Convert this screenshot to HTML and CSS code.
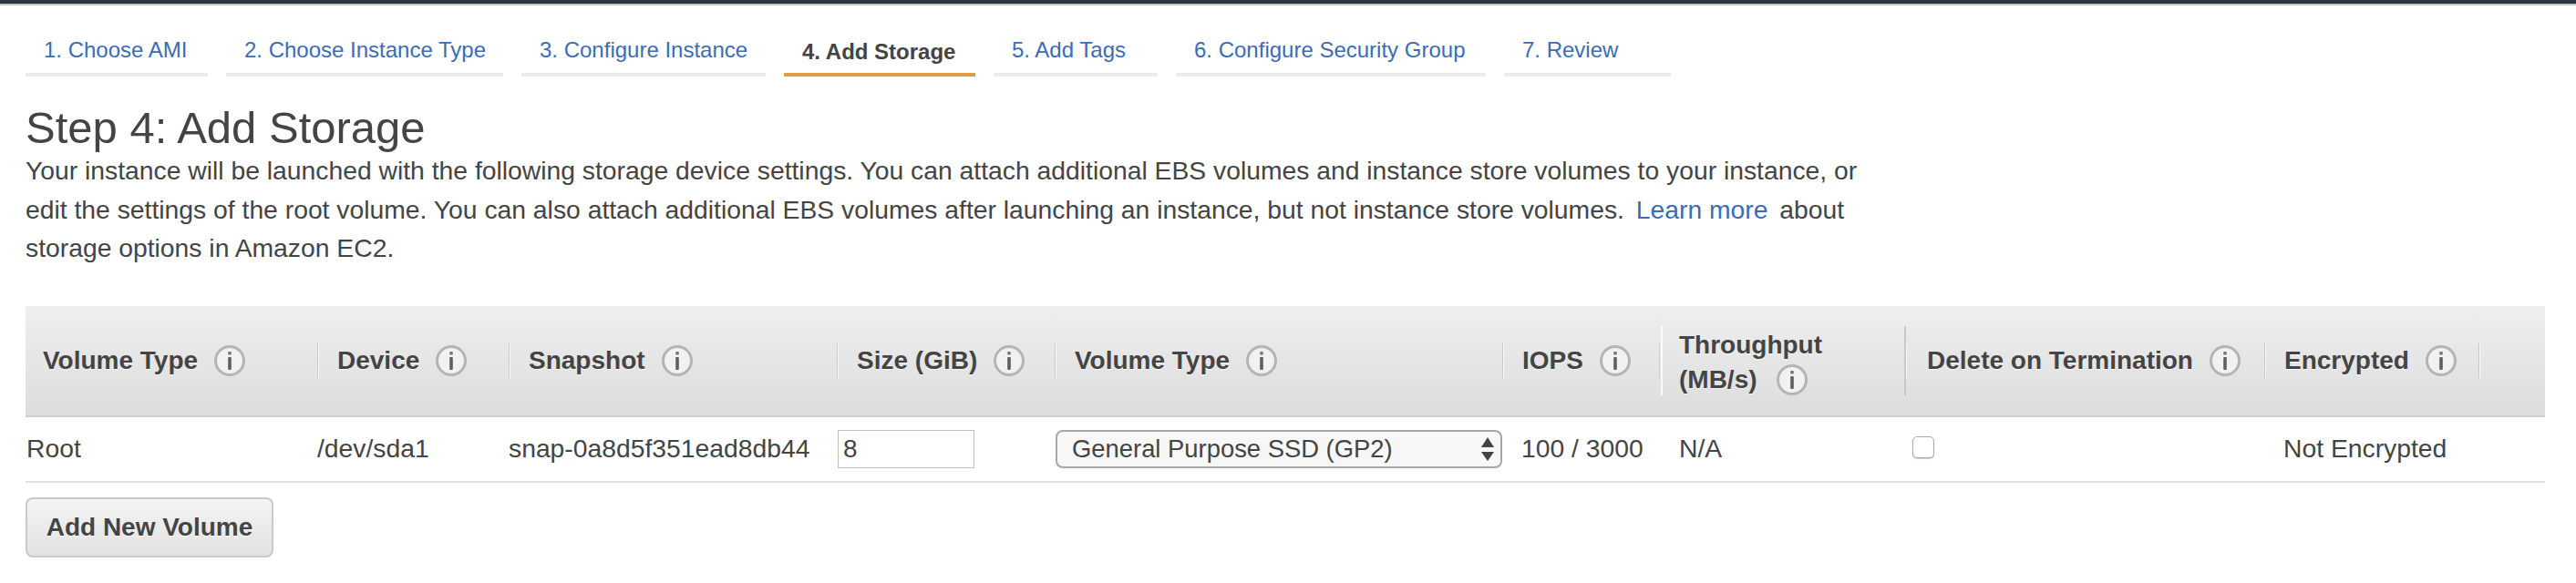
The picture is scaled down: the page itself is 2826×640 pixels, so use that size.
FILE: index.html

```html
<!DOCTYPE html>
<html lang="en">
<head>
    <meta charset="UTF-8">
    <title>Step 4: Add Storage</title>
    <link rel="stylesheet" href="styles.css">
</head>
<body>
    <div class="topBar"></div>

    <ul class="steps">
        <li class="step step1"><a href="#">1. Choose AMI</a></li>
        <li class="step step2"><a href="#">2. Choose Instance Type</a></li>
        <li class="step step3"><a href="#">3. Configure Instance</a></li>
        <li class="step step4 active"><a href="#">4. Add Storage</a></li>
        <li class="step step5"><a href="#">5. Add Tags</a></li>
        <li class="step step6"><a href="#">6. Configure Security Group</a></li>
        <li class="step step7"><a href="#">7. Review</a></li>
    </ul>

    <h1 class="title">Step 4: Add Storage</h1>
    <p class="intro">
        Your instance will be launched with the following storage device settings. You can attach additional EBS volumes and instance store volumes to your instance, or<br>
        edit the settings of the root volume. You can also attach additional EBS volumes after launching an instance, but not instance store volumes. <a class="learnMore" href="#">Learn more</a> about<br>
        storage options in Amazon EC2.
    </p>

    <table class="volumes">
        <colgroup>
            <col class="colType">
            <col class="colDevice">
            <col class="colSnapshot">
            <col class="colSize">
            <col class="colVolume">
            <col class="colIops">
            <col class="colThroughput">
            <col class="colDelete">
            <col class="colEncrypted">
            <col>
        </colgroup>
        <thead>
            <tr>
                <th><div class="head first">Volume Type <svg class="info" viewBox="0 0 34 34"><use href="#infoIcon"/></svg></div></th>
                <th><div class="head sep">Device <svg class="info" viewBox="0 0 34 34"><use href="#infoIcon"/></svg></div></th>
                <th><div class="head sep">Snapshot <svg class="info" viewBox="0 0 34 34"><use href="#infoIcon"/></svg></div></th>
                <th><div class="head sep">Size (GiB) <svg class="info" viewBox="0 0 34 34"><use href="#infoIcon"/></svg></div></th>
                <th><div class="head sep">Volume Type <svg class="info" viewBox="0 0 34 34"><use href="#infoIcon"/></svg></div></th>
                <th><div class="head sep iops">IOPS <svg class="info" viewBox="0 0 34 34"><use href="#infoIcon"/></svg></div></th>
                <th><div class="head tall">Throughput<br>(MB/s) <svg class="info" viewBox="0 0 34 34"><use href="#infoIcon"/></svg></div></th>
                <th><div class="head sep afterTall">Delete on Termination <svg class="info" viewBox="0 0 34 34"><use href="#infoIcon"/></svg></div></th>
                <th><div class="head sep">Encrypted <svg class="info" viewBox="0 0 34 34"><use href="#infoIcon"/></svg></div></th>
                <th><div class="head sep"></div></th>
            </tr>
        </thead>
        <tbody>
            <tr>
                <td class="tight">Root</td>
                <td>/dev/sda1</td>
                <td>snap-0a8d5f351ead8db44</td>
                <td><input class="sizeInput" type="text" value="8"></td>
                <td>
                    <div class="selectWrap">
                        <select class="volumeSelect">
                            <option>General Purpose SSD (GP2)</option>
                        </select>
                        <svg class="selectArrows" width="16" height="26" viewBox="0 0 16 26">
                            <path d="M8 0 L15 11 L1 11 Z M1 16 L15 16 L8 26 Z" fill="#444"/>
                        </svg>
                    </div>
                </td>
                <td class="padded">100 / 3000</td>
                <td class="padded">N/A</td>
                <td class="checkCell"><input class="deleteCheck" type="checkbox"></td>
                <td class="padded" colspan="2">Not Encrypted</td>
            </tr>
        </tbody>
    </table>

    <button class="addVolume">Add New Volume</button>

    <svg class="iconDefs" width="0" height="0">
        <symbol id="infoIcon" viewBox="0 0 34 34">
            <circle cx="17" cy="17" r="15.5" fill="#f1f1f1" stroke="#b4b4b4" stroke-width="3"/>
            <rect x="15.2" y="7" width="3.6" height="3.6" rx="1" fill="#777"/>
            <rect x="15.2" y="13" width="3.6" height="14" rx="1" fill="#5f5f5f"/>
        </symbol>
    </svg>
</body>
</html>
```

FILE: styles.css

```css
body {
    font-family: "Liberation Sans", Arial, sans-serif;
    margin: 0;
    background-color: white;
    color: #444;
    font-size: 28.3px;
}

a {
    text-decoration: none;
    color: #3b6cb4;
}

.topBar {
    height: 4px;
    background-color: #2b3442;
    border-bottom: 2px solid #c4c4c4;
}

.steps {
    display: flex;
    gap: 20px;
    list-style-type: none;
    margin: 0;
    padding: 30px 0 0 28px;
}

.step {
    height: 44px;
    padding: 0 20px;
    border-bottom: 4px solid #ececec;
    box-sizing: content-box;
    font-size: 24px;
    line-height: 38px;
    white-space: nowrap;
}

.step1 { width: 160px; }
.step2 { width: 264px; }
.step3 { width: 228px; }
.step4 { width: 170px; }
.step5 { width: 140px; }
.step6 { width: 300px; }
.step7 { width: 143px; }

.step.active {
    border-bottom-color: #e39c45;
}

.step.active a {
    color: #444;
    font-weight: bold;
    position: relative;
    top: 2px;
}

.title {
    margin: 27px 0 0 28px;
    font-size: 49px;
    font-weight: normal;
    line-height: 58px;
}

.intro {
    margin: -3px 0 0 28px;
    line-height: 42.6px;
    white-space: nowrap;
}

.learnMore {
    margin: 0 5px;
}

.volumes {
    width: 2764px;
    margin: 42px 0 0 28px;
    border-collapse: collapse;
    table-layout: fixed;
}

.colType { width: 320px; }
.colDevice { width: 210px; }
.colSnapshot { width: 360px; }
.colSize { width: 239px; }
.colVolume { width: 491px; }
.colIops { width: 173px; }
.colThroughput { width: 270px; }
.colDelete { width: 393px; }
.colEncrypted { width: 235px; }

th {
    height: 120px;
    padding: 0;
    background: linear-gradient(#eeeeee, #dddddd);
    border-bottom: 2px solid #cfcfcf;
    text-align: left;
}

.head {
    display: flex;
    align-items: center;
    gap: 18px;
    min-height: 38px;
    padding-left: 21px;
    font-size: 28px;
    line-height: 38px;
    white-space: nowrap;
    text-shadow: 0 1px 0 #f6f6f6;
}

.head.first {
    padding-left: 19px;
}

.head.sep {
    border-left: 1px solid #c8c8c8;
    box-shadow: inset 1px 0 0 #fafafa;
}

.head.iops {
    border-right: 1px solid #d0d0d0;
}

.head.afterTall {
    border-left-color: #fafafa;
    box-shadow: none;
    padding-left: 22px;
}

.head.tall {
    display: block;
    margin-left: 1px;
    padding: 2px 0 0 18px;
    height: 76px;
    box-sizing: border-box;
    border-left: 2px solid #fafafa;
    border-right: 2px solid #c8c8c8;
}

.info {
    flex: none;
    width: 34px;
    height: 34px;
}

.head.tall .info {
    margin-left: 14px;
    vertical-align: -8px;
}

.iconDefs {
    position: absolute;
}

td {
    height: 70px;
    padding: 0;
    border-bottom: 2px solid #e2e2e2;
    white-space: nowrap;
}

td.tight {
    padding-left: 1px;
}

td.padded {
    padding-left: 21px;
}

td.checkCell {
    padding-left: 7px;
}

.sizeInput {
    display: block;
    width: 150px;
    height: 42px;
    margin-left: 1px;
    padding: 0 5px;
    box-sizing: border-box;
    border: 1px solid #c0c0c0;
    font-family: inherit;
    font-size: 28px;
    color: #444;
}

.selectWrap {
    position: relative;
    width: 490px;
    margin-left: 1px;
}

.volumeSelect {
    display: block;
    width: 100%;
    height: 42px;
    padding: 0 16px;
    appearance: none;
    background-color: #f7f7f7;
    border: 2px solid #a6a6a6;
    border-radius: 8px;
    font-family: inherit;
    font-size: 27.4px;
    color: #444;
}

.selectArrows {
    position: absolute;
    right: 8px;
    top: 8px;
}

.deleteCheck {
    display: block;
    width: 24px;
    height: 24px;
    margin: -3px 0 0;
    appearance: none;
    background-color: white;
    border: 1px solid #aaa;
    border-radius: 5px;
    box-shadow: 0 1px 1px #ccc;
}

.addVolume {
    display: block;
    width: 272px;
    height: 66px;
    margin: 16px 0 0 28px;
    padding: 0;
    background: linear-gradient(#f4f4f4, #e2e2e2);
    border: 2px solid #c9c9c9;
    border-radius: 8px;
    font-family: inherit;
    font-size: 28px;
    font-weight: bold;
    color: #444;
    text-shadow: 0 1px 0 white;
}
```
